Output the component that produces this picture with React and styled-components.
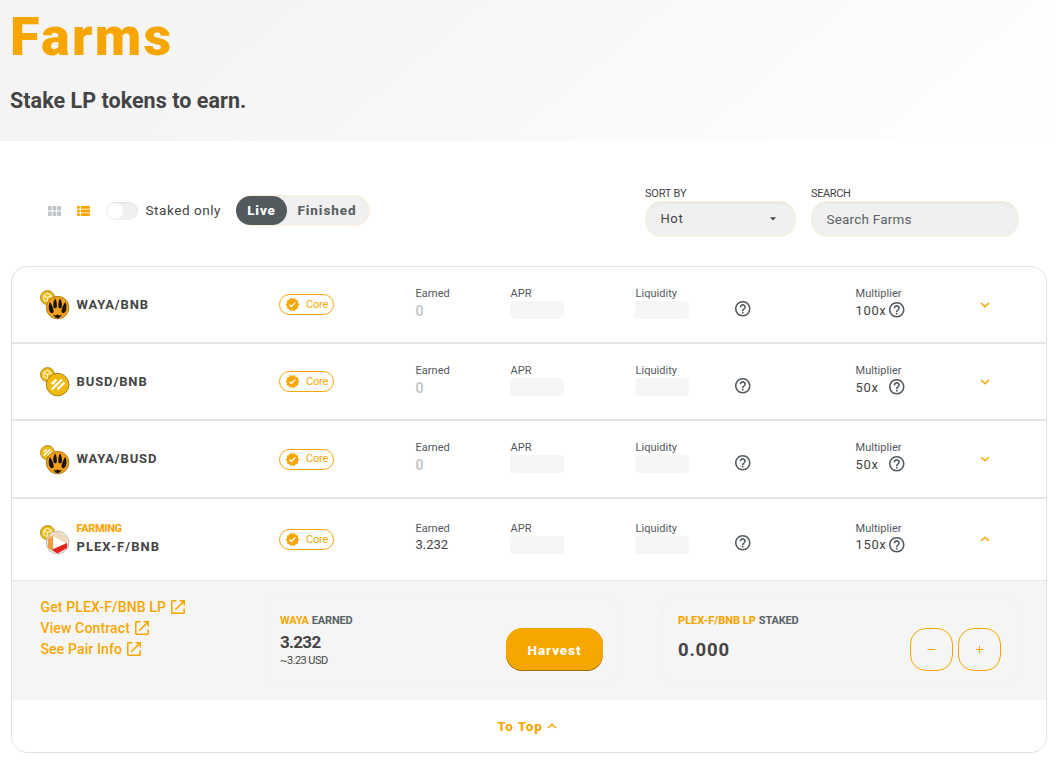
import React from 'react';
import styled, { createGlobalStyle } from 'styled-components';

const GlobalStyle = createGlobalStyle`
  * { box-sizing: border-box; }
  body {
    margin: 0;
    background: #fff;
    color: #444444;
    font-family: Roboto, "Liberation Sans", sans-serif;
    overflow: hidden;
  }
  button, input { font-family: inherit; }
`;

const orange = '#f7a600';

const Text = styled.span`
  display: block;
  white-space: nowrap;
  font-size: ${(p) => p.$size || 13}px;
  font-weight: ${(p) => p.$weight || 400};
  line-height: ${(p) => p.$line || 16}px;
  letter-spacing: ${(p) => p.$track || 0}px;
  color: ${(p) => p.$color || '#444444'};
`;

const Header = styled.header`
  height: 141px;
  padding: 12px 10px 0;
  background: linear-gradient(139.73deg, #f4f4f4 0%, #f5f5f5 25%, #ffffff 100%);
`;

const Title = styled.h1`
  margin: 0;
  color: ${orange};
  font-size: 54px;
  font-weight: 900;
  line-height: 50px;
  letter-spacing: 2.3px;
`;

const Subtitle = styled.h2`
  margin: 26px 0 0;
  color: #444444;
  font-size: 21.5px;
  font-weight: 700;
  line-height: 26px;
  letter-spacing: 0.04px;
`;

const Controls = styled.section`
  display: flex;
  justify-content: space-between;
  align-items: flex-start;
  height: 125px;
  padding: 45px 37px 0 48px;
`;

const ViewControls = styled.div`
  display: flex;
  align-items: center;
  height: 30px;
  margin-top: 9px;
`;

const ViewButton = styled.button`
  display: flex;
  width: 13px;
  height: 10px;
  margin: 1px 16px 0 0;
  padding: 0;
  border: 0;
  background: none;
  color: ${(p) => (p.$active ? orange : '#bfc4c8')};
`;

const Switch = styled.div`
  width: 32px;
  height: 18px;
  margin-top: 1px;
  padding: 1px;
  border-radius: 9px;
  background: #f0f0f0;
  box-shadow: inset 0 1px 2px rgba(0, 0, 0, 0.08);
`;

const Knob = styled.div`
  width: 16px;
  height: 16px;
  border-radius: 50%;
  background: #fff;
`;

const SwitchLabel = styled.div`
  width: 98px;
  padding: 0 0 0 7.5px;
`;

const Tabs = styled.div`
  display: flex;
  width: 134px;
  height: 31px;
  border: 1px solid #fdf0da;
  border-left: 0;
  border-radius: 16px;
  background: #f0f0f0;
`;

const Tab = styled.button`
  width: ${(p) => (p.$active ? 51 : 80)}px;
  height: 29px;
  padding: 0;
  border: 0;
  border-radius: 15px;
  background: ${(p) => (p.$active ? '#525a5e' : 'transparent')};
  color: ${(p) => (p.$active ? '#ffffff' : '#5b6266')};
  font-size: 13.5px;
  font-weight: 800;
  letter-spacing: 0.9px;
`;

const Filters = styled.div`
  display: flex;
  gap: 15px;
`;

const Field = styled.label`
  display: flex;
  flex-direction: column;
  width: ${(p) => p.$width}px;
`;

const FieldBox = styled.div`
  display: flex;
  align-items: center;
  justify-content: space-between;
  height: 36px;
  margin-top: -1px;
  padding: 0 19px 0 14.5px;
  border: 1px solid #fdf0da;
  border-radius: 16px;
  background: #f0f0f0;
  box-shadow: inset 0 2px 2px -1px rgba(74, 74, 104, 0.1);
`;

const SearchInput = styled.input`
  width: 100%;
  padding: 0;
  border: 0;
  outline: 0;
  background: transparent;
  font-size: 13.5px;
  letter-spacing: 0.2px;
  color: #5b6266;
  &::placeholder { color: #5b6266; opacity: 1; }
`;

const Card = styled.main`
  width: 1036px;
  height: 487px;
  margin-left: 11px;
  overflow: hidden;
  border: 1px solid #e0e0e0;
  border-radius: 16px;
  background: #fff;
`;

const FarmRow = styled.div`
  display: grid;
  grid-template-columns: 36.5px 202.5px 136px 95px 125px 100px 120px 125px 20px;
  align-items: center;
  height: ${(p) => p.$height}px;
  padding-left: 28px;
  border-bottom: ${(p) => (p.$open ? 1 : 2)}px solid #e6e6e6;
`;

const Coins = styled.svg`
  display: block;
  width: 30px;
  height: 30px;
  margin-top: 1px;
`;

const FarmName = styled.div`
  padding-bottom: ${(p) => (p.$open ? 4 : 0)}px;
`;

const CoreBadge = styled.div`
  display: flex;
  align-items: center;
  gap: 6px;
  width: 55px;
  height: 21px;
  padding-left: 5px;
  border: 1px solid ${orange};
  border-radius: 11px;
`;

const Metric = styled.div`
  padding-bottom: ${(p) => p.$lift || 5}px;
`;

const MetricCaption = styled.div`
  height: 16px;
  padding: 1px 0 0 0.5px;
`;

const MetricValue = styled.div`
  display: flex;
  align-items: center;
  height: 18px;
`;

const MetricNumber = styled.div`
  width: 34px;
  padding: ${(p) => (p.$open ? 0 : 1)}px 0 0 0.5px;
`;

const Skeleton = styled.div`
  width: 54px;
  height: 18px;
  border-radius: 4px;
  background: #f5f7f7;
`;

const HelpSlot = styled.div`
  padding-top: ${(p) => p.$top}px;
`;

const ChevronSlot = styled.div`
  display: flex;
  padding-bottom: ${(p) => (p.$open ? 2 : 0)}px;
`;

const Details = styled.section`
  display: flex;
  height: 119px;
  padding: 15px 28px 0;
  background: #f5f5f5;
`;

const Links = styled.nav`
  width: 225px;
  padding-left: 0.5px;
`;

const DetailLink = styled.a`
  display: flex;
  align-items: center;
  gap: 5px;
  height: 21.3px;
  color: ${orange};
`;

const ActionBox = styled.div`
  display: flex;
  justify-content: space-between;
  width: ${(p) => p.$width}px;
  height: 90px;
  margin-right: ${(p) => p.$after || 0}px;
  padding: 16px 15px 0 ${(p) => p.$left || 14}px;
  border: 1px solid #f1f1f1;
  border-radius: 16px;
`;

const ActionLabel = styled.div`
  display: flex;
  gap: 3px;
`;

const HarvestButton = styled.button`
  width: 97px;
  height: 43px;
  margin-top: 15px;
  padding: 0;
  border: 0;
  border-radius: 16px;
  background: ${orange};
  box-shadow: inset 0 -1px 0 rgba(14, 14, 44, 0.4);
  color: #fff;
  font-size: 13.5px;
  font-weight: 800;
  letter-spacing: 0.9px;
`;

const Steppers = styled.div`
  display: flex;
  gap: 5px;
  padding-top: 15px;
  margin-right: 1px;
`;

const StepButton = styled.button`
  display: flex;
  align-items: center;
  justify-content: center;
  width: 43px;
  height: 43px;
  padding: 0;
  border: 1px solid ${orange};
  border-radius: 16px;
  background: transparent;
  color: ${orange};
`;

const ToTop = styled.button`
  display: flex;
  align-items: center;
  justify-content: center;
  gap: 4px;
  width: 100%;
  height: 52px;
  padding: 0 4px 0 0;
  border: 0;
  background: #fff;
`;

const HelpIcon = styled.svg`
  display: block;
  flex: none;
`;

const Help = () => (
  <HelpIcon width="15.5" height="15.5" viewBox="2 2 20 20" fill="#52585c">
    <path d="M11 18h2v-2h-2v2zm1-16C6.48 2 2 6.48 2 12s4.48 10 10 10 10-4.48 10-10S17.52 2 12 2zm0 18c-4.41 0-8-3.59-8-8s3.59-8 8-8 8 3.59 8 8-3.59 8-8 8zm0-14c-2.21 0-4 1.79-4 4h2c0-1.1.9-2 2-2s2 .9 2 2c0 2-3 1.75-3 5h2c0-2.25 3-2.5 3-5 0-2.21-1.79-4-4-4z" />
  </HelpIcon>
);

const External = () => (
  <svg width="14" height="14" viewBox="3 3 18 18" fill="currentColor">
    <path d="M19 19H5V5h5V3H5c-1.11 0-2 .9-2 2v14c0 1.1.89 2 2 2h14c1.1 0 2-.9 2-2v-5h-2v5zM14 3v2h3.59l-9.83 9.83 1.41 1.41L19 6.41V10h2V3h-7z" />
  </svg>
);

const Verified = () => (
  <svg width="15" height="15" viewBox="0 0 24 24" fill={orange}>
    <path d="M23 12l-2.44-2.79.34-3.69-3.61-.82-1.89-3.2L12 2.96 8.6 1.5 6.71 4.69 3.1 5.5l.34 3.7L1 12l2.44 2.79-.34 3.7 3.61.82L8.6 22.5l3.4-1.47 3.4 1.46 1.89-3.19 3.61-.82-.34-3.69L23 12zm-12.91 4.72l-3.8-3.81 1.48-1.48 2.32 2.33 5.85-5.87 1.48 1.48-7.33 7.35z" />
  </svg>
);

const Chevron = ({ up }) => (
  <svg width="10" height="6" viewBox="0 0 10 6" fill="none" stroke={orange} strokeWidth="1.5">
    <path d={up ? 'M1 5L5 1.2L9 5' : 'M1 1L5 4.8L9 1'} />
  </svg>
);

const GridIcon = () => (
  <svg width="13" height="10" viewBox="0 0 13 10" fill="currentColor">
    {[0, 4.6, 9.2].map((x) => [0, 5.4].map((y) => (
      <rect key={`${x}-${y}`} x={x} y={y} width="3.8" height="4.6" rx="0.8" />
    )))}
  </svg>
);

const ListIcon = () => (
  <svg width="13" height="10" viewBox="0 0 13 10" fill="currentColor">
    {[0, 3.6, 7.2].map((y) => (
      <React.Fragment key={y}>
        <rect x="0" y={y} width="2.9" height="2.8" rx="0.7" />
        <rect x="3.8" y={y} width="9.2" height="2.8" rx="0.7" />
      </React.Fragment>
    ))}
  </svg>
);

const BusdMark = () => (
  <g stroke="#fff" fill="none" strokeWidth="2.3" transform="rotate(-45)">
    <path d="M-3.8 -4.4H2.6M-7.6 -0.6H6.6M-3.4 3.4H6.4" />
  </g>
);

const BnbMark = () => (
  <g stroke="#fff7d6" fill="none" strokeWidth="1.7">
    <path d="M0 -6.6L5.8 -3.3V3.3L0 6.6L-5.8 3.3V-3.3Z" />
    <path d="M-5 -2.6L0 0L5 -2.6M0 0V5" />
  </g>
);

const WayaMark = () => (
  <g fill="#17130c">
    <path d="M-2.4 -9C-0.9 -7 -0.4 -3 -1 0.2C-2 1.2 -3.6 0.8 -4.1 -0.4C-4.8 -3 -4 -7 -2.4 -9Z" />
    <path d="M2.4 -9C0.9 -7 0.4 -3 1 0.2C2 1.2 3.6 0.8 4.1 -0.4C4.8 -3 4 -7 2.4 -9Z" />
    <path d="M-7.8 -5.6C-6 -3.6 -4.4 0.2 -3.9 3.2C-3.8 5.4 -5.6 6.4 -7.2 5C-9.4 2.6 -9.2 -2.6 -7.8 -5.6Z" />
    <path d="M7.8 -5.6C6 -3.6 4.4 0.2 3.9 3.2C3.8 5.4 5.6 6.4 7.2 5C9.4 2.6 9.2 -2.6 7.8 -5.6Z" />
    <path d="M-4.4 6.9L-2 7.8L0 7L2 7.8L4.4 6.9L2.4 9.7L0 10.8L-2.4 9.7Z" />
  </g>
);

const PlexMark = () => (
  <g>
    <path d="M0 -11L-9.7 -5.5V5.5L-4 6V-6Z" fill="#f1b86c" />
    <path d="M-9.7 -3L-9.7 5.5L0 11L-4.4 5V-5Z" fill="#ef9a3c" />
    <path d="M0 -11L-7 -6.8L-4 -6L6 0L9.7 1V-5.5Z" fill="#eed9bd" />
    <path d="M-5.4 6.6L9.5 0.5V5.5L0 11L-5 8Z" fill="#e5251d" />
    <path d="M-4.4 -6.4L7.4 0.3L-4.4 6.6Z" fill="#fff" />
  </g>
);

const PairIcon = ({ small, big }) => (
  <Coins viewBox="0 0 30 30">
    <circle cx="7.5" cy="7.6" r="7" fill="#f0b90b" stroke="#a8861c" strokeWidth="0.9" />
    <g transform="translate(7.5 7.6) scale(.65)">{small === 'busd' ? <BusdMark /> : <BnbMark />}</g>
    <circle
      cx="17.6"
      cy="17.6"
      r="11.3"
      fill={big === 'waya' ? '#f4a019' : big === 'busd' ? '#f0b90b' : '#f7f3ef'}
      stroke={big === 'plex' ? '#b5b0aa' : '#a07a1a'}
      strokeWidth="0.9"
    />
    <g transform="translate(17.6 17.6)">
      {big === 'waya' && <WayaMark />}
      {big === 'busd' && <BusdMark />}
      {big === 'plex' && <PlexMark />}
    </g>
  </Coins>
);

const farms = [
  { name: 'WAYA/BNB', small: 'bnb', big: 'waya', mult: '100x', height: 77, track: 0.85, helpTop: 9 },
  { name: 'BUSD/BNB', small: 'bnb', big: 'busd', mult: '50x', height: 77, track: 0.9, helpTop: 9 },
  { name: 'WAYA/BUSD', small: 'busd', big: 'waya', mult: '50x', height: 78, track: 0.85, lift: 6, helpTop: 7.5 },
  { name: 'PLEX-F/BNB', small: 'bnb', big: 'plex', mult: '150x', height: 82, track: 1.05, earned: '3.232', open: true, helpTop: 6.5 },
];

const MetricLabel = ({ children }) => (
  <MetricCaption>
    <Text $size={11} $track={0.03} $color="#52585c">{children}</Text>
  </MetricCaption>
);

const Farm = ({ farm }) => (
  <FarmRow $height={farm.height} $open={farm.open}>
    <PairIcon small={farm.small} big={farm.big} />
    <FarmName $open={farm.open}>
      {farm.open && <Text $size={11} $weight={800} $line={18} $track={-0.35} $color={orange}>FARMING</Text>}
      <Text $weight={700} $line={18} $track={farm.track}>{farm.name}</Text>
    </FarmName>
    <CoreBadge>
      <Verified />
      <Text $size={11} $track={-0.2} $color={orange}>Core</Text>
    </CoreBadge>
    <Metric $lift={farm.lift}>
      <MetricLabel>Earned</MetricLabel>
      <MetricValue>
        <MetricNumber $open={farm.open}>
          {farm.earned
            ? <Text>{farm.earned}</Text>
            : <Text $weight={500} $size={14} $color="#bdc2c4">0</Text>}
        </MetricNumber>
      </MetricValue>
    </Metric>
    <Metric $lift={farm.lift}>
      <MetricLabel>APR</MetricLabel>
      <Skeleton />
    </Metric>
    <Metric $lift={farm.lift}>
      <MetricLabel>Liquidity</MetricLabel>
      <Skeleton />
    </Metric>
    <HelpSlot $top={farm.helpTop}><Help /></HelpSlot>
    <Metric $lift={farm.lift}>
      <MetricLabel>Multiplier</MetricLabel>
      <MetricValue>
        <MetricNumber $open={farm.open}><Text $track={0.65}>{farm.mult}</Text></MetricNumber>
        <Help />
      </MetricValue>
    </Metric>
    <ChevronSlot $open={farm.open}><Chevron up={farm.open} /></ChevronSlot>
  </FarmRow>
);

const links = ['Get PLEX-F/BNB LP', 'View Contract', 'See Pair Info'];

export default function App() {
  return (
    <>
      <GlobalStyle />
      <Header>
        <Title>Farms</Title>
        <Subtitle>Stake LP tokens to earn.</Subtitle>
      </Header>
      <Controls>
        <ViewControls>
          <ViewButton aria-label="Card view"><GridIcon /></ViewButton>
          <ViewButton $active aria-label="Table view"><ListIcon /></ViewButton>
          <Switch><Knob /></Switch>
          <SwitchLabel><Text $size={13.5} $track={0.55}>Staked only</Text></SwitchLabel>
          <Tabs>
            <Tab $active>Live</Tab>
            <Tab>Finished</Tab>
          </Tabs>
        </ViewControls>
        <Filters>
          <Field $width={151}>
            <Text $size={11} $track={-0.2}>SORT BY</Text>
            <FieldBox>
              <Text $track={0.6}>Hot</Text>
              <svg width="6" height="4" viewBox="0 0 6 4" fill="#444"><path d="M0 0.2H6L3 3.6Z" /></svg>
            </FieldBox>
          </Field>
          <Field $width={208}>
            <Text $size={11} $track={-0.4}>SEARCH</Text>
            <FieldBox><SearchInput placeholder="Search Farms" /></FieldBox>
          </Field>
        </Filters>
      </Controls>
      <Card>
        {farms.map((farm) => <Farm key={farm.name} farm={farm} />)}
        <Details>
          <Links>
            {links.map((link) => (
              <DetailLink key={link}>
                <Text $size={14} $weight={500} $track={0.13} $color={orange}>{link}</Text>
                <External />
              </DetailLink>
            ))}
          </Links>
          <ActionBox $width={354} $after={43}>
            <div>
              <ActionLabel>
                <Text $size={11} $weight={700} $track={-0.2} $color={orange}>WAYA</Text>
                <Text $size={11} $weight={700} $track={-0.15} $color="#5b6266">EARNED</Text>
              </ActionLabel>
              <Text $size={17} $weight={700} $line={26} $track={-0.7}>3.232</Text>
              <Text $size={11} $line={12} $track={-0.55}>~3.23 USD</Text>
            </div>
            <HarvestButton>Harvest</HarvestButton>
          </ActionBox>
          <ActionBox $width={356} $left={15}>
            <div>
              <ActionLabel>
                <Text $size={11} $weight={800} $track={0} $color={orange}>PLEX-F/BNB LP</Text>
                <Text $size={11} $weight={700} $track={-0.2} $color="#5b6266">STAKED</Text>
              </ActionLabel>
              <Text $size={18.5} $weight={700} $line={42} $track={0.8}>0.000</Text>
            </div>
            <Steppers>
              <StepButton aria-label="Unstake">
                <svg width="9" height="9" viewBox="0 0 9 9" stroke="currentColor" strokeWidth="1"><path d="M.5 4.5H8.5" /></svg>
              </StepButton>
              <StepButton aria-label="Stake">
                <svg width="9" height="9" viewBox="0 0 9 9" stroke="currentColor" strokeWidth="1"><path d="M1 4.5H8M4.5 1V8" /></svg>
              </StepButton>
            </Steppers>
          </ActionBox>
        </Details>
        <ToTop>
          <Text $size={13.5} $weight={800} $track={0.9} $color={orange}>To Top</Text>
          <Chevron up />
        </ToTop>
      </Card>
    </>
  );
}
